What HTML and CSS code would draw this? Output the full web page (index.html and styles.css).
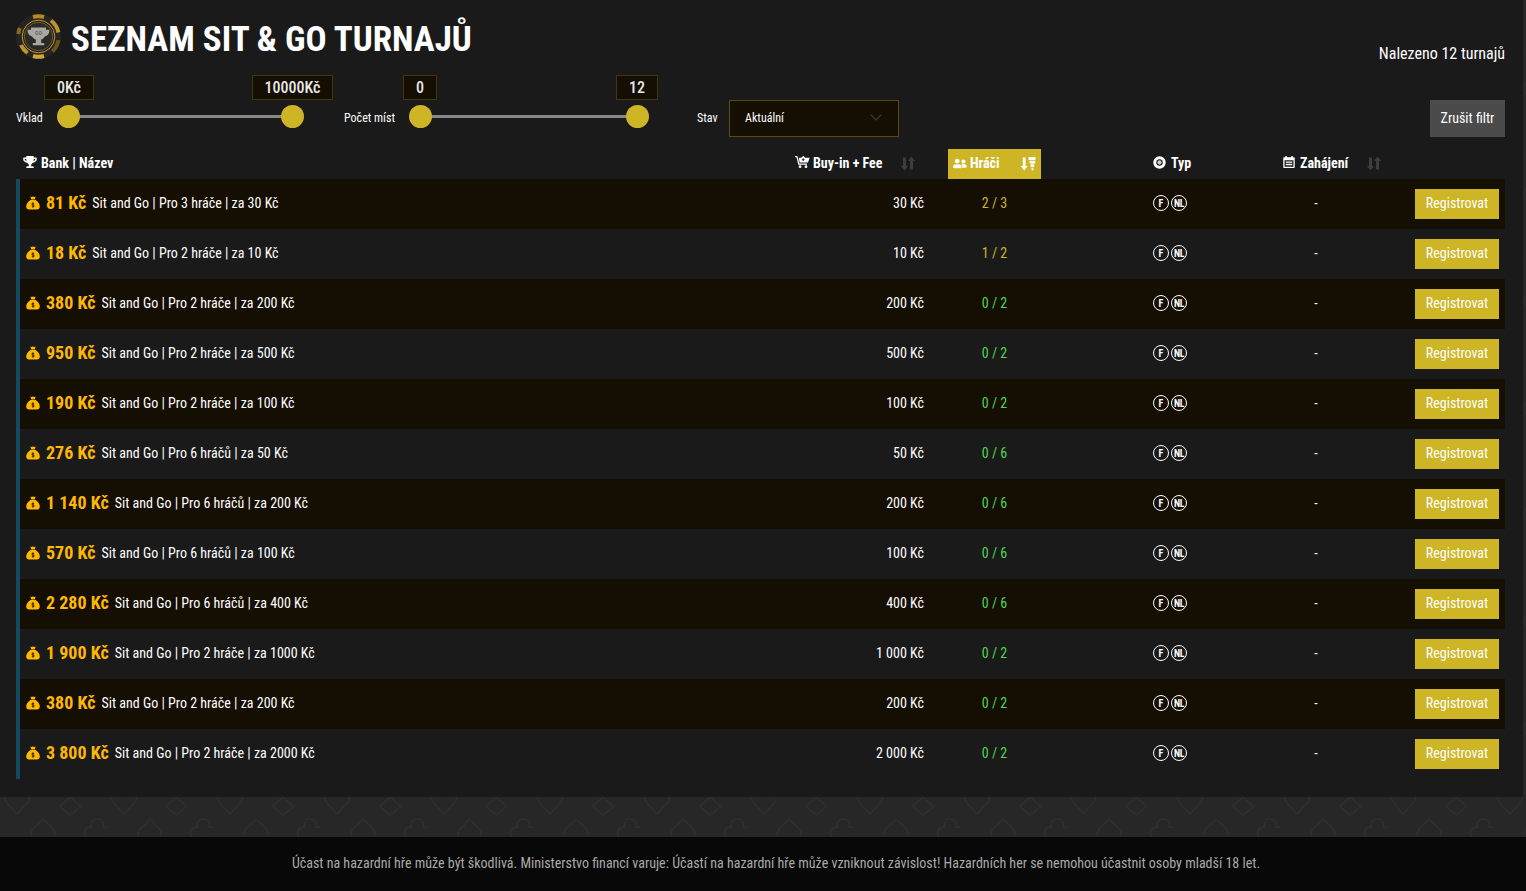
FILE: index.html
```html
<!DOCTYPE html>
<html lang="cs">
<head>
  <meta charset="UTF-8">
  <meta name="viewport" content="width=device-width, initial-scale=1.0">
  <title>Seznam Sit &amp; Go turnajů</title>
  <link rel="stylesheet" href="styles.css">
</head>
<body>
  <svg class="icon-defs" width="0" height="0">
    <symbol id="i-trophy" viewBox="0 0 576 512"><path d="M552 64H448V24c0-13.3-10.7-24-24-24H152c-13.3 0-24 10.7-24 24v40H24C10.7 64 0 74.7 0 88v56c0 35.7 22.5 72.4 61.9 100.7 31.5 22.7 69.8 37.1 110 41.7C203.3 338.5 240 360 240 360v72h-48c-35.3 0-64 20.7-64 56v12c0 6.6 5.4 12 12 12h296c6.6 0 12-5.4 12-12v-12c0-35.3-28.7-56-64-56h-48v-72s36.7-21.5 68.1-73.6c40.3-4.6 78.7-19 110-41.7 39.3-28.3 61.9-65 61.9-100.7V88c0-13.3-10.7-24-24-24zM99.3 192.8C74.9 175.2 64 155.6 64 144v-16h64.2c1 32.6 5.8 61.2 12.8 86.2-15.1-5.2-29.2-12.4-41.7-21.4zM512 144c0 16.1-17.7 36.1-35.3 48.8-12.5 9-26.7 16.2-41.8 21.4 7-25 11.8-53.6 12.8-86.2H512v16z"/></symbol>
    <symbol id="i-users" viewBox="0 0 640 512"><path d="M192 256c61.9 0 112-50.1 112-112S253.900 32 192 32 80 82.100 80 144s50.100 112 112 112zm76.800 32h-8.300c-20.800 10-43.900 16-68.500 16s-47.600-6-68.500-16h-8.300C51.600 288 0 339.600 0 403.200V432c0 26.500 21.500 48 48 48h288c26.500 0 48-21.500 48-48v-28.800c0-63.600-51.600-115.200-115.200-115.200zM480 256c53 0 96-43 96-96s-43-96-96-96-96 43-96 96 43 96 96 96zm48 32h-3.800c-13.900 4.800-28.600 8-44.200 8s-30.300-3.200-44.200-8H432c-20.400 0-39.200 5.900-55.700 15.400 24.400 26.300 39.700 61.200 39.700 99.800v38.400c0 2.200-.5 4.300-.6 6.400H592c26.500 0 48-21.500 48-48 0-61.900-50.100-112-112-112z"/></symbol>
    <symbol id="i-bag" viewBox="0 0 14 14"><path d="M4.300 .5c.9.500 1.700.5 2.700 0 1 .5 1.800.5 2.700 0L8.700 3.200H5.300zM5 3.800h4c2.800 1.500 4.800 4 4.800 6.700 0 2-1.200 3-2.800 3H3c-1.600 0-2.800-1-2.800-3 0-2.700 2-5.200 4.800-6.700z"/><path class="bag-sign" d="M8.300 7.700c-.5-.6-2.600-.8-2.600.4 0 1.200 2.600.6 2.600 1.800 0 1.200-2.100 1-2.600.4M7 6.500v5"/></symbol>
    <symbol id="i-cart" viewBox="0 0 16 14"><path d="M0 .6h2.600l2 7.900h8.200v1.300H3.500L1.600 1.900H0zM4 2.400h2.800l2-2 2 2h3L13.300 2.400 15.600 2.400l-1.700 5H4.900z"/><path class="cart-cut" d="M8.700 3v3M7.300 4.500h2.800"/><circle cx="5.400" cy="12" r="1.500"/><circle cx="11.700" cy="12" r="1.500"/></symbol>
    <symbol id="i-sort" viewBox="0 0 14 14"><path d="M2 1h3v8.500h2L3.500 14 0 9.500h2zM10.500 0 14 4.500h-2V13H9V4.500H7z"/></symbol>
    <symbol id="i-sort-down" viewBox="0 0 16 14"><path d="M2.800 1h2.800v8.500h2.200L4.200 14 .6 9.500h2.200zM8.500 .6h7v2.800h-7zM9.500 4.200h5.800v2.800H9.500zM10.600 7.800h3.600v2.600h-3.600zM11.500 11.200h1.900v2.600h-1.900z"/></symbol>
    <symbol id="i-chip" viewBox="0 0 14 14"><path fill-rule="evenodd" d="M7 .3a6.700 6.700 0 1 0 0 13.400A6.700 6.700 0 0 0 7 .3zm0 3.200a3.500 3.500 0 1 1 0 7 3.500 3.500 0 0 1 0-7z"/><circle cx="7" cy="7" r="2.300" fill="#ccc"/></symbol>
    <symbol id="i-cal" viewBox="0 0 13 14"><path fill-rule="evenodd" d="M2.500 .4h1.600v1.400h4.800V.4h1.600v1.400h1.400c.5 0 .8.300.8.800v10c0 .5-.3.800-.8.800H1.100c-.5 0-.8-.3-.8-.8v-10c0-.5.300-.8.800-.8h1.400zM1.700 5v7.200h9.600V5z"/><path d="M3 6.500h7v1.400H3zM3 9h7v1.400H3z"/></symbol>
  </svg>

  <div class="panel">
    <div class="top-row">
      <h1 class="page-title">
        <svg class="logo" viewBox="0 0 45 45">
          <circle cx="22.500" cy="22.500" r="22.500" fill="#262524"/>
          <g fill="none" stroke="#b58a25" stroke-width="4">
            <path d="M17 3a20.500 20.500 0 0 1 11 0"/>
            <path d="M17 42a20.500 20.500 0 0 0 11 0" stroke="#d0a63a"/>
            <path d="M3.800 14a20.500 20.500 0 0 0-1.500 6" stroke="#8a6a1c"/>
            <path d="M35 6.500a20.500 20.500 0 0 1 7.400 12" stroke="#c0932a"/>
            <path d="M42.400 26a20.500 20.500 0 0 1-6 11.500" stroke="#6e5317"/>
            <path d="M5 31a20.500 20.500 0 0 0 6.500 8" stroke="#c0932a"/>
          </g>
          <circle cx="22.500" cy="22.500" r="16.300" fill="#1b1a18" stroke="#c9a23e" stroke-width="1"/>
          <circle cx="22.500" cy="22.500" r="14.200" fill="#2a2927" stroke="#8a6c20" stroke-width=".8"/>
          <path fill="#a9a7a1" d="M15 13.500h15v2.200h3.500c0 4-2 6.300-4.700 6.800-1 1.700-2.300 2.700-3.600 3.100v3.400h3v2.300H16.800v-2.300h3v-3.400c-1.300-.4-2.600-1.400-3.600-3.100-2.700-.5-4.700-2.800-4.700-6.800H15z"/>
          <text x="22.500" y="20.500" text-anchor="middle" class="logo-text">GO</text>
        </svg>
        <span class="title-text">SEZNAM SIT &amp; GO TURNAJŮ</span>
      </h1>
      <div class="found-count">Nalezeno 12 turnajů</div>
    </div>

    <div class="filter-row">
      <label class="filter-label label-deposit">Vklad</label>
      <div class="slider slider-deposit">
        <div class="slider-track"></div>
        <div class="slider-value value-min">0Kč</div>
        <div class="slider-value value-max">10000Kč</div>
        <div class="slider-thumb thumb-min"></div>
        <div class="slider-thumb thumb-max"></div>
      </div>
      <label class="filter-label label-seats">Počet míst</label>
      <div class="slider slider-seats">
        <div class="slider-track"></div>
        <div class="slider-value value-min">0</div>
        <div class="slider-value value-max">12</div>
        <div class="slider-thumb thumb-min"></div>
        <div class="slider-thumb thumb-max"></div>
      </div>
      <label class="filter-label label-state">Stav</label>
      <div class="select-box">
        <span>Aktuální</span>
        <svg class="select-arrow" viewBox="0 0 12 7"><path d="M1 1l5 5 5-5"/></svg>
      </div>
      <button class="clear-btn">Zrušit filtr</button>
    </div>

    <div class="table-head">
      <div class="th"><svg class="th-icon icon-trophy"><use href="#i-trophy"/></svg>Bank | Název</div>
      <div class="th th-buyin"><svg class="th-icon icon-cart"><use href="#i-cart"/></svg>Buy-in + Fee<svg class="sort-icon"><use href="#i-sort"/></svg></div>
      <div class="th th-players"><svg class="th-icon icon-users"><use href="#i-users"/></svg>Hráči<svg class="sort-active"><use href="#i-sort-down"/></svg></div>
      <div class="th th-type"><svg class="th-icon icon-chip"><use href="#i-chip"/></svg>Typ</div>
      <div class="th th-start"><svg class="th-icon icon-cal"><use href="#i-cal"/></svg>Zahájení<svg class="sort-icon"><use href="#i-sort"/></svg></div>
      <div></div>
    </div>

    <div class="table-body">
      <div class="row">
        <div class="cell-name"><svg class="bag"><use href="#i-bag"/></svg><span class="bank">81 Kč</span><span class="name">Sit and Go | Pro 3 hráče | za 30 Kč</span></div>
        <div class="cell-buyin">30 Kč</div>
        <div class="cell-players partly">2 / 3</div>
        <div class="cell-type"><span class="badge">F</span><span class="badge badge-nl">NL</span></div>
        <div class="cell-start">-</div>
        <div class="cell-action"><button class="reg-btn">Registrovat</button></div>
      </div>
      <div class="row">
        <div class="cell-name"><svg class="bag"><use href="#i-bag"/></svg><span class="bank">18 Kč</span><span class="name">Sit and Go | Pro 2 hráče | za 10 Kč</span></div>
        <div class="cell-buyin">10 Kč</div>
        <div class="cell-players partly">1 / 2</div>
        <div class="cell-type"><span class="badge">F</span><span class="badge badge-nl">NL</span></div>
        <div class="cell-start">-</div>
        <div class="cell-action"><button class="reg-btn">Registrovat</button></div>
      </div>
      <div class="row">
        <div class="cell-name"><svg class="bag"><use href="#i-bag"/></svg><span class="bank">380 Kč</span><span class="name">Sit and Go | Pro 2 hráče | za 200 Kč</span></div>
        <div class="cell-buyin">200 Kč</div>
        <div class="cell-players">0 / 2</div>
        <div class="cell-type"><span class="badge">F</span><span class="badge badge-nl">NL</span></div>
        <div class="cell-start">-</div>
        <div class="cell-action"><button class="reg-btn">Registrovat</button></div>
      </div>
      <div class="row">
        <div class="cell-name"><svg class="bag"><use href="#i-bag"/></svg><span class="bank">950 Kč</span><span class="name">Sit and Go | Pro 2 hráče | za 500 Kč</span></div>
        <div class="cell-buyin">500 Kč</div>
        <div class="cell-players">0 / 2</div>
        <div class="cell-type"><span class="badge">F</span><span class="badge badge-nl">NL</span></div>
        <div class="cell-start">-</div>
        <div class="cell-action"><button class="reg-btn">Registrovat</button></div>
      </div>
      <div class="row">
        <div class="cell-name"><svg class="bag"><use href="#i-bag"/></svg><span class="bank">190 Kč</span><span class="name">Sit and Go | Pro 2 hráče | za 100 Kč</span></div>
        <div class="cell-buyin">100 Kč</div>
        <div class="cell-players">0 / 2</div>
        <div class="cell-type"><span class="badge">F</span><span class="badge badge-nl">NL</span></div>
        <div class="cell-start">-</div>
        <div class="cell-action"><button class="reg-btn">Registrovat</button></div>
      </div>
      <div class="row">
        <div class="cell-name"><svg class="bag"><use href="#i-bag"/></svg><span class="bank">276 Kč</span><span class="name">Sit and Go | Pro 6 hráčů | za 50 Kč</span></div>
        <div class="cell-buyin">50 Kč</div>
        <div class="cell-players">0 / 6</div>
        <div class="cell-type"><span class="badge">F</span><span class="badge badge-nl">NL</span></div>
        <div class="cell-start">-</div>
        <div class="cell-action"><button class="reg-btn">Registrovat</button></div>
      </div>
      <div class="row">
        <div class="cell-name"><svg class="bag"><use href="#i-bag"/></svg><span class="bank">1 140 Kč</span><span class="name">Sit and Go | Pro 6 hráčů | za 200 Kč</span></div>
        <div class="cell-buyin">200 Kč</div>
        <div class="cell-players">0 / 6</div>
        <div class="cell-type"><span class="badge">F</span><span class="badge badge-nl">NL</span></div>
        <div class="cell-start">-</div>
        <div class="cell-action"><button class="reg-btn">Registrovat</button></div>
      </div>
      <div class="row">
        <div class="cell-name"><svg class="bag"><use href="#i-bag"/></svg><span class="bank">570 Kč</span><span class="name">Sit and Go | Pro 6 hráčů | za 100 Kč</span></div>
        <div class="cell-buyin">100 Kč</div>
        <div class="cell-players">0 / 6</div>
        <div class="cell-type"><span class="badge">F</span><span class="badge badge-nl">NL</span></div>
        <div class="cell-start">-</div>
        <div class="cell-action"><button class="reg-btn">Registrovat</button></div>
      </div>
      <div class="row">
        <div class="cell-name"><svg class="bag"><use href="#i-bag"/></svg><span class="bank">2 280 Kč</span><span class="name">Sit and Go | Pro 6 hráčů | za 400 Kč</span></div>
        <div class="cell-buyin">400 Kč</div>
        <div class="cell-players">0 / 6</div>
        <div class="cell-type"><span class="badge">F</span><span class="badge badge-nl">NL</span></div>
        <div class="cell-start">-</div>
        <div class="cell-action"><button class="reg-btn">Registrovat</button></div>
      </div>
      <div class="row">
        <div class="cell-name"><svg class="bag"><use href="#i-bag"/></svg><span class="bank">1 900 Kč</span><span class="name">Sit and Go | Pro 2 hráče | za 1000 Kč</span></div>
        <div class="cell-buyin">1 000 Kč</div>
        <div class="cell-players">0 / 2</div>
        <div class="cell-type"><span class="badge">F</span><span class="badge badge-nl">NL</span></div>
        <div class="cell-start">-</div>
        <div class="cell-action"><button class="reg-btn">Registrovat</button></div>
      </div>
      <div class="row">
        <div class="cell-name"><svg class="bag"><use href="#i-bag"/></svg><span class="bank">380 Kč</span><span class="name">Sit and Go | Pro 2 hráče | za 200 Kč</span></div>
        <div class="cell-buyin">200 Kč</div>
        <div class="cell-players">0 / 2</div>
        <div class="cell-type"><span class="badge">F</span><span class="badge badge-nl">NL</span></div>
        <div class="cell-start">-</div>
        <div class="cell-action"><button class="reg-btn">Registrovat</button></div>
      </div>
      <div class="row">
        <div class="cell-name"><svg class="bag"><use href="#i-bag"/></svg><span class="bank">3 800 Kč</span><span class="name">Sit and Go | Pro 2 hráče | za 2000 Kč</span></div>
        <div class="cell-buyin">2 000 Kč</div>
        <div class="cell-players">0 / 2</div>
        <div class="cell-type"><span class="badge">F</span><span class="badge badge-nl">NL</span></div>
        <div class="cell-start">-</div>
        <div class="cell-action"><button class="reg-btn">Registrovat</button></div>
      </div>
    </div>
  </div>

  <div class="footer-band"></div>
  <div class="footer">Účast na hazardní hře může být škodlivá. Ministerstvo financí varuje: Účastí na hazardní hře může vzniknout závislost! Hazardních her se nemohou účastnit osoby mladší 18 let.</div>
</body>
</html>
```

FILE: styles.css
```css
html, body {
  margin: 0;
  padding: 0;
  height: 891px;
  overflow: hidden;
}

body {
  font-family: Roboto, sans-serif;
  font-stretch: 75%;
  color: #fff;
  background-color: #272727;
  background-position: 0 -3px;
  background-image: url("data:image/svg+xml,%3Csvg xmlns='http://www.w3.org/2000/svg' width='106.67' height='106.67'%3E%3Cg fill='none' stroke='%232f2f2f' stroke-width='1.2'%3E%3Cpath d='M17 71L7.500 60.500c-3-3.500-3.500-6-3-9M17 71l9.500-10.500c3-3.500 3.500-6 3-9'/%3E%3Cpath d='M70 54l10.500 9-10.500 9-10.500-9z'/%3E%3Cpath d='M43 76l9.500 9c4 4 3 11-2 13-3 1-5.500 0-7.500-2-2 2-4.500 3-7.500 2-5-2-6-9-2-13z'/%3E%3Cpath d='M97 76a5.500 5.500 0 0 1 5.500 8 6 6 0 1 1-3 10h-5a6 6 0 1 1-3-10 5.500 5.500 0 0 1 5.500-8z'/%3E%3C/g%3E%3C/svg%3E");
}

.icon-defs {
  position: absolute;
}

button {
  font-family: inherit;
  font-stretch: inherit;
}

.panel {
  width: 1523px;
  height: 797px;
  background: #1a1a1a;
  box-sizing: border-box;
  padding: 14px 0 0 16px;
}

.top-row {
  display: flex;
  justify-content: space-between;
  align-items: flex-start;
  width: 1489px;
  height: 45px;
}

.page-title {
  display: flex;
  align-items: center;
  gap: 10px;
  margin: 0;
  font-size: 35px;
  font-weight: 700;
}

.title-text {
  line-height: 39px;
  padding-top: 6px;
}

.logo {
  width: 45px;
  height: 45px;
}

.logo-text {
  font-size: 6px;
  font-weight: 700;
  fill: #6d6b66;
}

.found-count {
  font-size: 16px;
  line-height: 20px;
  margin-top: 30px;
}

/* filters */
.filter-row {
  display: flex;
  align-items: center;
  width: 1489px;
  height: 37px;
  margin-top: 41px;
}

.filter-label {
  font-size: 12px;
  margin-bottom: 2px;
}

.label-deposit {
  width: 41px;
}

.label-seats {
  width: 65px;
  margin-left: 40px;
}

.label-state {
  width: 32px;
  margin-left: 48px;
}

.slider {
  position: relative;
  height: 23px;
  margin-bottom: 4px;
}

.slider-deposit {
  width: 247px;
}

.slider-seats {
  width: 240px;
}

.slider-track {
  position: absolute;
  left: 12px;
  right: 12px;
  top: 10px;
  height: 3px;
  background: #888;
}

.slider-thumb {
  position: absolute;
  top: 0;
  width: 23px;
  height: 23px;
  border-radius: 50%;
  background: #cdb526;
}

.thumb-min {
  left: 0;
}

.thumb-max {
  right: 0;
}

.slider-value {
  position: absolute;
  top: -30px;
  height: 23px;
  line-height: 23px;
  text-align: center;
  font-size: 16px;
  font-weight: 500;
  color: #e8e8e8;
  background: #150e03;
  border: 1px solid #44360b;
}

.slider-deposit .value-min {
  left: -13px;
  width: 48px;
}

.slider-deposit .value-max {
  right: -29px;
  width: 79px;
}

.slider-seats .value-min {
  left: -6px;
  width: 32px;
}

.slider-seats .value-max {
  right: -9px;
  width: 40px;
}

.select-box {
  display: flex;
  justify-content: space-between;
  align-items: center;
  box-sizing: border-box;
  width: 170px;
  height: 37px;
  padding: 0 16px 2px 15px;
  font-size: 12px;
  background: #150e03;
  border: 1px solid #5a4a0e;
}

.select-arrow {
  width: 12px;
  height: 7px;
  fill: none;
  stroke: #3c3a36;
  stroke-width: 1.2;
}

.clear-btn {
  margin-left: auto;
  width: 75px;
  height: 37px;
  padding: 0 0 2px;
  border: none;
  font-size: 14px;
  color: #fff;
  background: #4b4b4b;
}

/* table */
.table-head,
.row {
  display: grid;
  grid-template-columns: 766px 162px 93px 186px 178px 100px;
  align-items: center;
}

.table-head {
  height: 30px;
  margin: 12px 0 0 4px;
  font-size: 14px;
  font-weight: 700;
}

.th {
  display: flex;
  align-items: center;
  box-sizing: border-box;
  height: 30px;
  padding-bottom: 2px;
}

.th-icon {
  fill: #fff;
}

.icon-trophy {
  width: 14px;
  height: 12px;
  margin: 0 4px 2px 3px;
}

.th-buyin {
  padding-left: 9px;
}

.icon-cart {
  width: 15px;
  height: 14px;
  margin: 0 3px 2px 0;
}

.cart-cut {
  stroke: #1a1a1a;
  fill: none;
}

.sort-icon {
  width: 14px;
  height: 15px;
  margin-left: 19px;
  fill: #3d3d3d;
}

.th-players {
  background: #cdb526;
  padding-left: 5px;
}

.icon-users {
  width: 14px;
  height: 11px;
  margin-right: 3px;
}

.sort-active {
  width: 16px;
  height: 15px;
  margin-left: 20px;
  fill: #fff;
}

.th-type {
  padding-left: 112px;
}

.icon-chip {
  width: 13px;
  height: 13px;
  margin: 0 5px 2px 0;
}

.th-start {
  padding-left: 56px;
}

.icon-cal {
  width: 12px;
  height: 14px;
  margin: 0 5px 2px 0;
}

.th-start .sort-icon {
  margin-left: 19px;
}

.table-body {
  width: 1489px;
  box-sizing: border-box;
  border-left: 4px solid #134a5f;
}

.row {
  height: 50px;
  font-size: 14px;
}

.row:nth-child(odd) {
  background: #150e03;
}

.cell-name,
.cell-buyin,
.cell-players,
.cell-start {
  margin-bottom: 2px;
}

.cell-name {
  display: flex;
  align-items: center;
  padding-left: 6px;
}

.bag {
  width: 14px;
  height: 14px;
  margin-right: 6px;
  fill: #ffb800;
}

.bag-sign {
  fill: none;
  stroke: #150e03;
  stroke-width: .8;
}

.bank {
  font-size: 18px;
  font-weight: 700;
  color: #ffb800;
  margin: 0 6px 2px 0;
}

.cell-buyin {
  text-align: right;
  padding-right: 24px;
}

.cell-players {
  text-align: center;
  color: #4fd84f;
}

.cell-players.partly {
  color: #cdb526;
}

.cell-type {
  display: flex;
  gap: 2px;
  padding-left: 112px;
  margin-bottom: 2px;
}

.badge {
  display: flex;
  justify-content: center;
  align-items: center;
  box-sizing: border-box;
  width: 16px;
  height: 16px;
  border: 1.5px solid #fff;
  border-radius: 50%;
  font-size: 10px;
  font-weight: 700;
}

.badge-nl {
  font-size: 10px;
  letter-spacing: -.5px;
}

.cell-start {
  text-align: center;
}

.cell-action {
  padding-left: 10px;
}

.reg-btn {
  width: 84px;
  height: 30px;
  padding: 0 0 2px;
  border: none;
  font-size: 14px;
  color: #fff;
  background: #cdb526;
}

/* footer */
.footer-band {
  height: 40px;
}

.footer {
  height: 54px;
  line-height: 52px;
  padding-left: 26px;
  text-align: center;
  font-size: 14px;
  color: #aaa;
  background: #080808;
}
```
